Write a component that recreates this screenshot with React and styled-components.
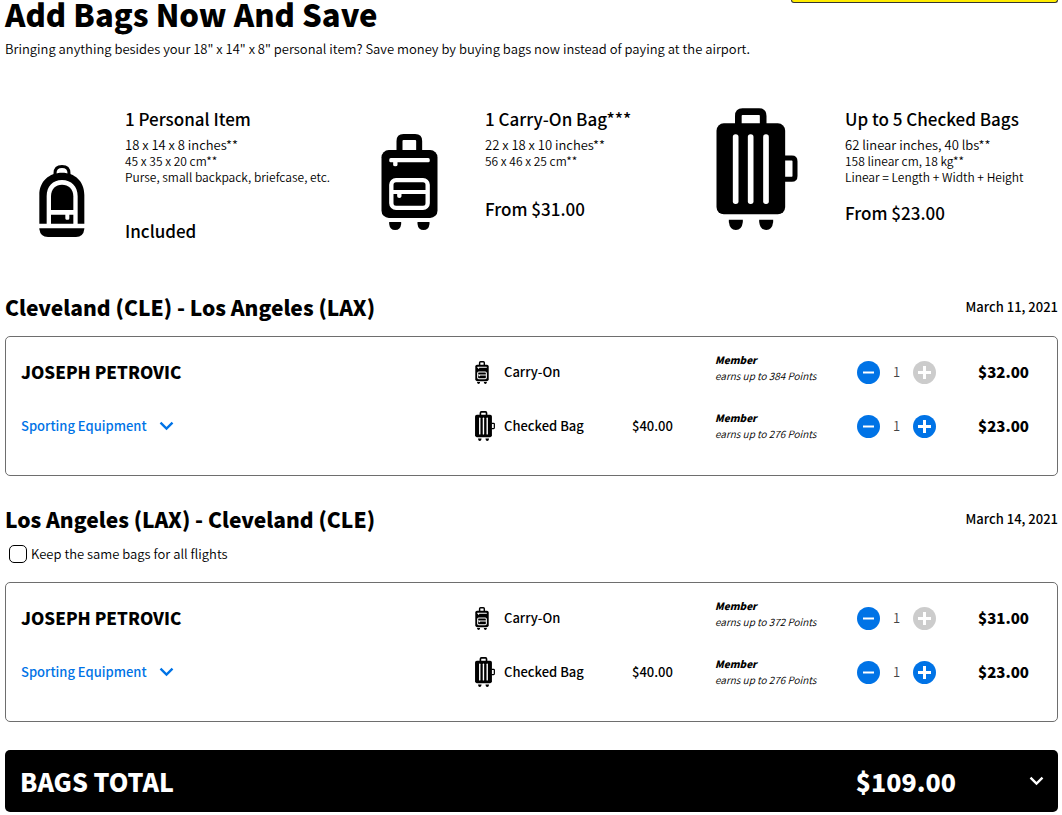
import React, { useState } from "react";
import styled, { createGlobalStyle } from "styled-components";

const bagTypes = [
  {
    title: "1 Personal Item",
    inches: "18 x 14 x 8 inches**",
    metric: "45 x 35 x 20 cm**",
    note: "Purse, small backpack, briefcase, etc.",
    price: "Included",
    space: 34,
    slot: 80,
    icon: "backpack",
  },
  {
    title: "1 Carry-On Bag***",
    inches: "22 x 18 x 10 inches**",
    metric: "56 x 46 x 25 cm**",
    price: "From $31.00",
    space: 28,
    slot: 89,
    icon: "carryOn",
  },
  {
    title: "Up to 5 Checked Bags",
    inches: "62 linear inches, 40 lbs**",
    metric: "158 linear cm, 18 kg**",
    note: "Linear = Length + Width + Height",
    price: "From $23.00",
    space: 16,
    slot: 98,
    icon: "checked",
  },
];

const flights = [
  {
    id: "outbound",
    route: "Cleveland (CLE) - Los Angeles (LAX)",
    date: "March 11, 2021",
    bags: [
      { type: "carryOn", label: "Carry-On", points: 384, price: 32, max: 1 },
      { type: "checked", label: "Checked Bag", airport: "$40.00", points: 276, price: 23, max: 5 },
    ],
  },
  {
    id: "return",
    route: "Los Angeles (LAX) - Cleveland (CLE)",
    date: "March 14, 2021",
    canCopy: true,
    bags: [
      { type: "carryOn", label: "Carry-On", points: 372, price: 31, max: 1 },
      { type: "checked", label: "Checked Bag", airport: "$40.00", points: 276, price: 23, max: 5 },
    ],
  },
];

const money = (value) => `$${value.toFixed(2)}`;

const BackpackIcon = (props) => (
  <svg viewBox="58 208 136 216" aria-hidden="true" {...props}>
    <path d="M105 242V233C105 219 114 212.500 126 212.500S147 219 147 233V242" fill="none" stroke="#000" strokeWidth="9" />
    <path d="M58 384V298C58 256 88 231 126 231S193 256 193 298V384H173V302C173 272 154 253 126 253S80 272 80 302V384Z" />
    <path d="M93 343V302C93 280 107 267 126 267S160 280 160 302V343Z" />
    <path d="M93 357H136V368Q136 372 139 372H145Q148 372 148 368V357H160V384H93Z" />
    <path d="M58 398H193V400Q190 424 168 424H84Q61 424 58 400Z" />
  </svg>
);

const CarryOnIcon = (props) => (
  <svg viewBox="65 117 168 288" aria-hidden="true" {...props}>
    <path d="M119 168V138Q119 126 131 126H166Q178 126 178 138V168" fill="none" stroke="#000" strokeWidth="18" />
    <rect x="65" y="165" width="168" height="204" rx="22" />
    <path d="M93 189H205Q210 189 210 195.500T205 202H113V210Q113 214 106.500 214T100 210V202H93Q88 202 88 195.500T93 189Z" fill="#fff" />
    <rect x="94.500" y="255.500" width="109" height="83" rx="14" fill="none" stroke="#fff" strokeWidth="13" />
    <path d="M98 285H200V297H125V304Q125 309 118.500 309T112 304V297H98Z" fill="#fff" />
    <path d="M88 381H124V387Q122 405 106 405T88 387Z" />
    <path d="M173 381H209V387Q207 405 191 405T173 387Z" />
  </svg>
);

const CheckedBagIcon = (props) => (
  <svg viewBox="48 38 243 366" aria-hidden="true" {...props}>
    <path d="M113.500 88V62Q113.500 49 126 49H176Q188 49 188 62V88" fill="none" stroke="#000" strokeWidth="20" />
    <rect x="48" y="84" width="206" height="273" rx="22" />
    <path d="M250 188H274Q283.500 188 283.500 198V242Q283.500 252 274 252H250" fill="none" stroke="#000" strokeWidth="15" />
    <rect x="97" y="117" width="17" height="209" rx="8" fill="#fff" />
    <rect x="142" y="117" width="17" height="209" rx="8" fill="#fff" />
    <rect x="188" y="117" width="17" height="209" rx="8" fill="#fff" />
    <path d="M85 373H127V380Q124 404 106 404T85 380Z" />
    <path d="M176 373H218V380Q215 404 197 404T176 380Z" />
  </svg>
);

const Chevron = () => (
  <svg width="15" height="10" viewBox="0 0 15 10" aria-hidden="true">
    <path d="M1.500 1.700L7.500 7.500L13.500 1.700" fill="none" stroke="currentColor" strokeWidth="2.400" />
  </svg>
);

const largeIcons = {
  backpack: <BackpackIcon width="46" height="72" />,
  carryOn: <CarryOnIcon width="57" height="96" />,
  checked: <CheckedBagIcon width="82" height="122" />,
};

const smallIcons = {
  carryOn: <CarryOnIcon width="14" height="23" />,
  checked: <CheckedBagIcon width="20" height="30" />,
};

const BagRow = ({ flightId, bag, count, onChange, children }) => (
  <Row $first={bag.type === "carryOn"}>
    {children}
    <Item>
      <ItemIcon>{smallIcons[bag.type]}</ItemIcon>
      {bag.label}
    </Item>
    <AirportPrice>{bag.airport}</AirportPrice>
    <Points>
      <strong>Member</strong>
      <span>earns up to {bag.points} Points</span>
    </Points>
    <Stepper>
      <RoundButton
        type="button"
        aria-label={`Remove ${bag.label}`}
        disabled={count === 0}
        onClick={() => onChange(flightId, bag.type, count - 1)}
      >
        <svg width="23" height="23" viewBox="0 0 23 23" aria-hidden="true">
          <path d="M6 11.500H17" stroke="#fff" strokeWidth="2" />
        </svg>
      </RoundButton>
      <output>{count}</output>
      <RoundButton
        type="button"
        aria-label={`Add ${bag.label}`}
        disabled={count === bag.max}
        onClick={() => onChange(flightId, bag.type, count + 1)}
      >
        <svg width="23" height="23" viewBox="0 0 23 23" aria-hidden="true">
          <path d="M5 11.500H18M11.500 5V18" stroke="#fff" strokeWidth="3" />
        </svg>
      </RoundButton>
    </Stepper>
    <Amount>{money(bag.price * count)}</Amount>
  </Row>
);

const App = () => {
  const [counts, setCounts] = useState({
    outbound: { carryOn: 1, checked: 1 },
    return: { carryOn: 1, checked: 1 },
  });
  const [sameBags, setSameBags] = useState(false);

  const changeCount = (flightId, type, value) => {
    setCounts({ ...counts, [flightId]: { ...counts[flightId], [type]: value } });
  };

  const toggleSameBags = (e) => {
    setSameBags(e.target.checked);
    if (e.target.checked) {
      setCounts({ ...counts, return: counts.outbound });
    }
  };

  const total = flights.reduce(
    (sum, flight) =>
      sum + flight.bags.reduce((s, bag) => s + bag.price * counts[flight.id][bag.type], 0),
    0
  );

  return (
    <Page>
      <GlobalStyle />
      <Header>
        <h1>Add Bags Now And Save</h1>
        <YellowButton type="button" aria-label="Continue" />
      </Header>
      <Intro>
        Bringing anything besides your 18" x 14" x 8" personal item? Save money by buying bags now
        instead of paying at the airport.
      </Intro>

      <BagTypes>
        {bagTypes.map((bag) => (
          <BagType key={bag.title}>
            <BagArt $width={bag.slot} $large={bag.icon !== "backpack"}>
              {largeIcons[bag.icon]}
            </BagArt>
            <BagInfo>
              <h2>{bag.title}</h2>
              <Inches>{bag.inches}</Inches>
              <Small>{bag.metric}</Small>
              {bag.note && <Small>{bag.note}</Small>}
              <FromPrice $space={bag.space}>{bag.price}</FromPrice>
            </BagInfo>
          </BagType>
        ))}
      </BagTypes>

      {flights.map((flight) => (
        <Flight key={flight.id}>
          <FlightHeader>
            <h2>{flight.route}</h2>
            <FlightDate>{flight.date}</FlightDate>
          </FlightHeader>
          {flight.canCopy && (
            <SameBags>
              <input type="checkbox" checked={sameBags} onChange={toggleSameBags} />
              Keep the same bags for all flights
            </SameBags>
          )}
          <Passenger>
            {flight.bags.map((bag, i) => (
              <BagRow
                key={bag.type}
                flightId={flight.id}
                bag={bag}
                count={counts[flight.id][bag.type]}
                onChange={changeCount}
              >
                {i === 0 ? (
                  <Name>JOSEPH PETROVIC</Name>
                ) : (
                  <SportingButton type="button">
                    Sporting Equipment
                    <Chevron />
                  </SportingButton>
                )}
              </BagRow>
            ))}
          </Passenger>
        </Flight>
      ))}

      <TotalBar type="button">
        <span>BAGS TOTAL</span>
        <TotalAmount>{money(total)}</TotalAmount>
        <Chevron />
      </TotalBar>
    </Page>
  );
};

const GlobalStyle = createGlobalStyle`
  * {
    box-sizing: border-box;
  }

  body {
    margin: 0;
    background: #fff;
    color: #000;
    font-family: "Noto Sans CJK JP", "Noto Sans", sans-serif;
    font-size: 13px;
    font-weight: 350;
    line-height: 18px;
  }

  h1, h2, h3, p {
    margin: 0;
  }

  button {
    font-family: inherit;
    cursor: pointer;
  }

  svg {
    display: block;
    flex-shrink: 0;
  }
`;

const Page = styled.main`
  padding: 0 4px 3px 5px;
`;

const Header = styled.header`
  display: flex;
  justify-content: space-between;
  align-items: flex-start;

  h1 {
    font-size: 31px;
    line-height: 28px;
    font-weight: 900;
  }
`;

const YellowButton = styled.button`
  width: 267px;
  height: 3px;
  padding: 0;
  border: 1px solid #333;
  border-top: none;
  border-radius: 0 0 5px 5px;
  background: #ffec00;
`;

const Intro = styled.p`
  padding-top: 12px;
`;

const BagTypes = styled.section`
  display: grid;
  grid-template-columns: repeat(3, 1fr);
  padding-top: 49px;
`;

const BagType = styled.article`
  display: flex;
  gap: 40px;
`;

const BagArt = styled.div`
  display: flex;
  justify-content: flex-end;
  align-items: flex-end;
  flex-shrink: 0;
  width: ${(props) => props.$width}px;
  padding: ${(props) => (props.$large ? "0 7px 13px 0" : "0 0 6px 0")};
`;

const BagInfo = styled.div`
  white-space: nowrap;

  h2 {
    font-size: 17px;
    line-height: 24px;
    font-weight: 500;
    margin-bottom: 6px;
  }
`;

const Inches = styled.p`
  font-size: 13px;
  line-height: 16px;
`;

const Small = styled.p`
  font-size: 12px;
  line-height: 16px;
`;

const FromPrice = styled.p`
  margin-top: ${(props) => props.$space}px;
  font-size: 17px;
  line-height: 24px;
  font-weight: 500;
`;

const Flight = styled.section`
  margin-top: 28px;

  ${BagTypes} + & {
    margin-top: 49px;
  }
`;

const FlightHeader = styled.div`
  display: flex;
  justify-content: space-between;
  align-items: center;

  h2 {
    font-size: 21px;
    line-height: 30px;
    font-weight: 900;
  }
`;

const FlightDate = styled.span`
  font-weight: 500;
`;

const SameBags = styled.label`
  display: flex;
  align-items: center;
  gap: 4px;
  padding: 11px 4px 5px;

  input {
    appearance: none;
    width: 18px;
    height: 18px;
    margin: 0;
    border: 1px solid #000;
    border-radius: 5px;
    background: #fff;
  }

  input:checked {
    background: #0073e6;
  }
`;

const Passenger = styled.div`
  display: flex;
  flex-direction: column;
  gap: 18px;
  margin-top: 14px;
  padding: 15px 28px 33px 15px;
  border: 1px solid #6e6e6e;
  border-radius: 5px;
`;

const Row = styled.div`
  display: grid;
  grid-template-columns: minmax(0, 1fr) 157px 83px 142px 79px 93px;
  align-items: center;
  height: ${(props) => (props.$first ? "40px" : "32px")};
`;

const Name = styled.h3`
  font-size: 17px;
  line-height: 24px;
  font-weight: 900;
`;

const SportingButton = styled.button`
  display: flex;
  align-items: center;
  justify-self: start;
  gap: 12px;
  padding: 0;
  border: none;
  background: none;
  color: #0073e6;
  font-size: 13px;
  line-height: 18px;
  font-weight: 500;
`;

const Item = styled.div`
  display: flex;
  align-items: center;
  font-weight: 500;
`;

const ItemIcon = styled.span`
  width: 29px;
`;

const AirportPrice = styled.span`
  font-weight: 500;
`;

const Points = styled.div`
  display: flex;
  flex-direction: column;
  align-self: start;
  font-size: 10px;
  line-height: 16px;
  font-style: italic;

  strong {
    font-weight: 900;
  }
`;

const Stepper = styled.div`
  display: flex;
  align-items: center;
  justify-content: space-between;

  output {
    color: #444;
    font-weight: 350;
  }
`;

const RoundButton = styled.button`
  width: 23px;
  height: 23px;
  padding: 0;
  border: none;
  border-radius: 50%;
  background: #0073e6;

  &:disabled {
    background: #ccc;
    cursor: default;
  }
`;

const Amount = styled.span`
  text-align: right;
  font-size: 15px;
  font-weight: 900;
`;

const TotalBar = styled.button`
  display: flex;
  align-items: center;
  width: 100%;
  height: 62px;
  margin-top: 28px;
  padding: 0 14px 0 15px;
  border: none;
  border-radius: 5px;
  background: #000;
  color: #fff;
  font-size: 25px;
  line-height: 32px;
  font-weight: 900;
`;

const TotalAmount = styled.span`
  margin-left: auto;
  margin-right: 73px;
`;

export default App;
